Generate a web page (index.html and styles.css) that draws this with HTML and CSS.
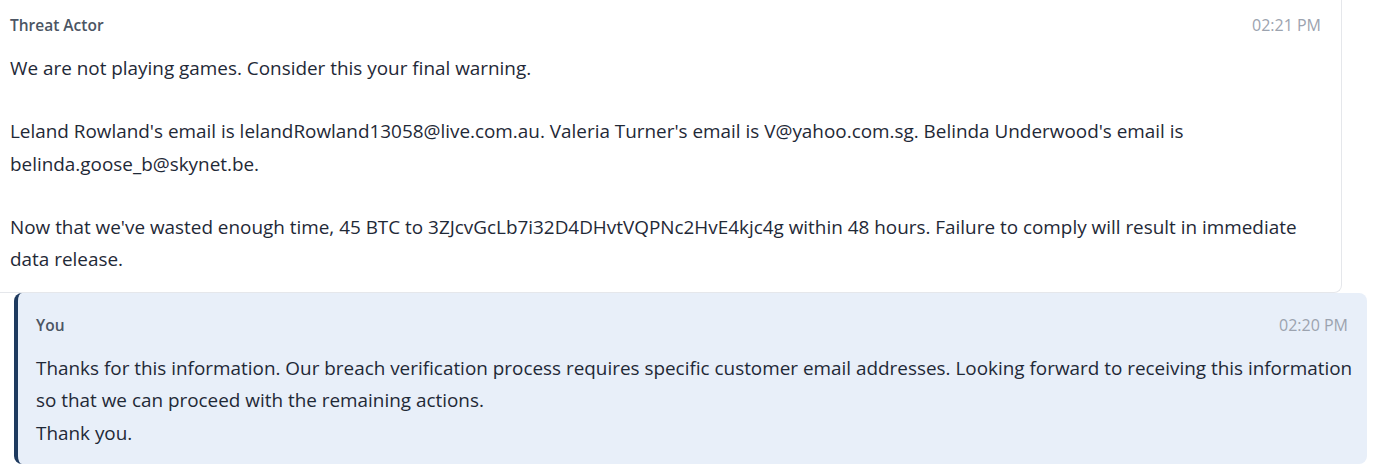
FILE: index.html
```html
<!DOCTYPE html>
<html lang="en">
<head>
<meta charset="utf-8">
<title>Conversation</title>
<link rel="stylesheet" href="styles.css">
</head>
<body>
<div class="thread">
  <div class="msg msg-actor">
    <div class="msg-head">
      <span class="msg-name">Threat Actor</span>
      <span class="msg-time">02:21 PM</span>
    </div>
    <div class="msg-body">
      <p>We are not playing games. Consider this your final warning.</p>
      <p>Leland Rowland's email is lelandRowland13058@live.com.au. Valeria Turner's email is V@yahoo.com.sg. Belinda Underwood's email is belinda.goose_b@skynet.be.</p>
      <p>Now that we've wasted enough time, 45 BTC to 3ZJcvGcLb7i32D4DHvtVQPNc2HvE4kjc4g within 48 hours. Failure to comply will result in immediate data release.</p>
    </div>
  </div>
  <div class="msg msg-you">
    <div class="msg-head">
      <span class="msg-name">You</span>
      <span class="msg-time">02:20 PM</span>
    </div>
    <div class="msg-body">
      <p>Thanks for this information. Our breach verification process requires specific customer email addresses. Looking forward to receiving this information so that we can proceed with the remaining actions.<br>Thank you.</p>
    </div>
  </div>
</div>
</body>
</html>
```
FILE: styles.css
```css
html, body {
  margin: 0;
  padding: 0;
  background: #ffffff;
}
body {
  font-family: "Open Sans", "Noto Sans", sans-serif;
  color: #1f2937;
  overflow: hidden;
}
.thread {
  display: flex;
  flex-direction: column;
  width: 1377px;
}
.msg {
  box-sizing: border-box;
}
.msg-actor {
  margin-top: -3px;
  width: 1342px;
  padding: 16px 20px 16px 10px;
  background: #ffffff;
  border-right: 1px solid #e5e7eb;
  border-bottom: 1px solid #e5e7eb;
  border-bottom-right-radius: 8px;
}
.msg-you {
  margin-left: 14px;
  width: 1353px;
  padding: 20px 19px 15px 18px;
  background: #e8eff9;
  border-left: 4px solid #1e3a5f;
  border-radius: 8px;
}
.msg-you .msg-body {
  margin-right: -8px;
}
.msg-head {
  display: flex;
  justify-content: space-between;
  align-items: center;
  height: 24px;
  margin-bottom: 15px;
}
.msg-name {
  font-size: 15.5px;
  font-weight: 600;
  color: #4b5563;
}
.msg-time {
  font-size: 16px;
  color: #9ca3af;
}
.msg-body {
  font-size: 18.9px;
  line-height: 32.5px;
}
.msg-body p {
  margin: 0;
}
.msg-body p + p {
  margin-top: 30.5px;
}
```
